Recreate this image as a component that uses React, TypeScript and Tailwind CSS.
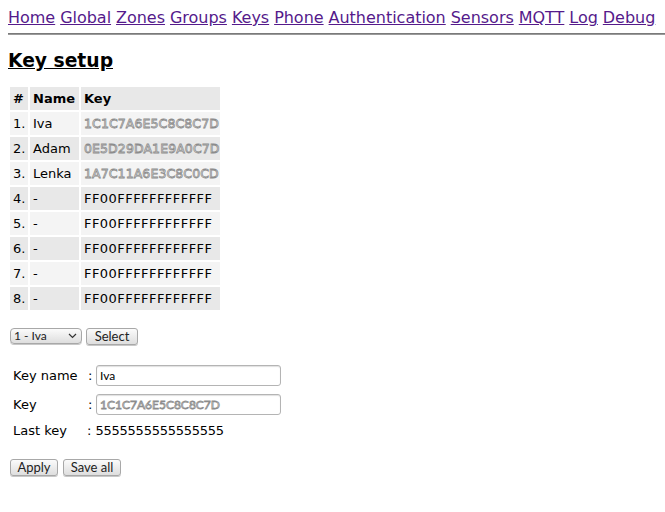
import React from "react";

const links = ["Home", "Global", "Zones", "Groups", "Keys", "Phone", "Authentication", "Sensors", "MQTT", "Log", "Debug"];

const rows: { n: string; name: string; key: string; hidden?: boolean }[] = [
  { n: "1.", name: "Iva", key: "1C1C7A6E5C8C8C7D", hidden: true },
  { n: "2.", name: "Adam", key: "0E5D29DA1E9A0C7D", hidden: true },
  { n: "3.", name: "Lenka", key: "1A7C11A6E3C8C0CD", hidden: true },
  { n: "4.", name: "-", key: "FF00FFFFFFFFFFFF" },
  { n: "5.", name: "-", key: "FF00FFFFFFFFFFFF" },
  { n: "6.", name: "-", key: "FF00FFFFFFFFFFFF" },
  { n: "7.", name: "-", key: "FF00FFFFFFFFFFFF" },
  { n: "8.", name: "-", key: "FF00FFFFFFFFFFFF" },
];

const btn =
  "h-[17px] rounded-[3px] border border-[#a8a8a8] bg-gradient-to-b from-[#fbfbfb] to-[#dedede] text-[13px] leading-[15px] text-[#222] shadow-[0_1px_0_#c8c8c8] [font-family:Lato,'Noto_Sans',sans-serif]";

const cell = "h-[23px] flex items-center whitespace-nowrap overflow-hidden pl-[3px]";

export default function App() {
  return (
    <div className="min-h-[512px] w-[665px] overflow-hidden bg-white pt-2 text-black [font-family:'DejaVu_Sans',sans-serif]">
      <nav className="pl-2 text-[16px] leading-[19px] tracking-[-0.02px] [word-spacing:-0.1px]">
        {links.map((l, i) => (
          <React.Fragment key={l}>
            <a href="#" className="text-[#551a8b] underline">
              {l}
            </a>
            {i < links.length - 1 ? " " : ""}
          </React.Fragment>
        ))}
      </nav>
      <div className="ml-2 mt-[6px] h-[2px] w-[657px] border-t border-b border-t-[#7a7a7a] border-b-[#9a9a9a]" />
      <h3 className="ml-2 mt-[15px] text-[18.72px] font-bold leading-[22px] underline">Key setup</h3>

      <div className="ml-2 mt-[13px] grid w-[214px] grid-cols-[18px_49px_139px] gap-[2px] p-[2px] text-[13px] leading-[17px]">
        <div className={`${cell} bg-[#e8e8e8] font-bold`}>#</div>
        <div className={`${cell} bg-[#e8e8e8] font-bold`}>Name</div>
        <div className={`${cell} bg-[#e8e8e8] font-bold`}>Key</div>
        {rows.map((r, i) => {
          const bg = i % 2 === 0 ? "bg-[#f4f4f4]" : "bg-[#e8e8e8]";
          return (
            <React.Fragment key={r.n}>
              <div className={`${cell} ${bg} pl-[2px]`}>{r.n}</div>
              <div className={`${cell} ${bg}`}>{r.name}</div>
              <div className={`${cell} ${bg}`}>
                {r.hidden ? (
                  <span className="text-[12.5px] tracking-[0.1px] text-white [-webkit-text-stroke:0.8px_#8c8c8c]">
                    {r.key}
                  </span>
                ) : (
                  <span className="tracking-[0.45px]">{r.key}</span>
                )}
              </div>
            </React.Fragment>
          );
        })}
      </div>

      <div className="ml-[10px] mt-[16px] flex h-[16px] items-center gap-[4px]">
        <div className="flex h-[16px] w-[72px] items-center justify-between rounded-[4px] border border-[#a8a8a8] bg-gradient-to-b from-[#fbfbfb] to-[#dedede] pl-[3px] pr-[4px] text-[12px] leading-[14px] text-[#222] shadow-[0_1px_0_#c8c8c8] [font-family:Lato,'Noto_Sans',sans-serif]">
          <span>1 - Iva</span>
          <svg width="9" height="6" viewBox="0 0 9 6" fill="none">
            <path d="M1 1l3.5 3.5L8 1" stroke="#333" strokeWidth="1.2" />
          </svg>
        </div>
        <button className={`${btn} h-[16px] w-[52px]`}>Select</button>
      </div>

      <div className="ml-[13px] mt-[21px] text-[13px] leading-[17px]">
        <div className="flex h-[21px] items-center">
          <span className="w-[75px]">Key name</span>
          <span className="w-[8px]">:</span>
          <div className="flex h-[21px] w-[185px] items-center rounded-[3px] border border-[#b4b4b4] bg-white pl-[3px] text-[12px] shadow-[inset_0_1px_1px_#e0e0e0] [font-family:Lato,'Noto_Sans',sans-serif]">
            Iva
          </div>
        </div>
        <div className="mt-[8px] flex h-[21px] items-center">
          <span className="w-[75px]">Key</span>
          <span className="w-[8px]">:</span>
          <div className="flex h-[21px] w-[185px] items-center rounded-[3px] border border-[#b4b4b4] bg-white pl-[3px] text-[12px] shadow-[inset_0_1px_1px_#e0e0e0]">
            <span className="text-white [-webkit-text-stroke:0.8px_#8c8c8c] [font-family:Lato,'Noto_Sans',sans-serif]">
              1C1C7A6E5C8C8C7D
            </span>
          </div>
        </div>
        <div className="mt-[7px] flex h-[17px] items-center">
          <span className="w-[74px]">Last key</span>
          <span>
            : <span className="tracking-[-0.25px]">5555555555555555</span>
          </span>
        </div>
      </div>

      <div className="ml-[10px] mt-[20px] flex gap-[5px]">
        <button className={`${btn} w-[48px]`}>Apply</button>
        <button className={`${btn} w-[58px]`}>Save all</button>
      </div>
    </div>
  );
}
